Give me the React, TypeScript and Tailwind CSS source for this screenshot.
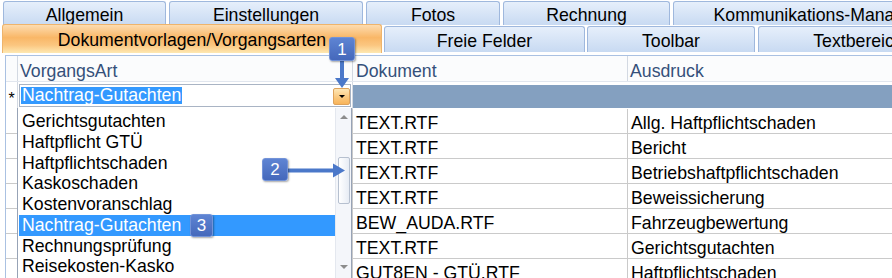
import React from "react";

const row1Tabs = [
  { label: "Allgemein", cls: "w-[163px]" },
  { label: "Einstellungen", cls: "w-[194px]" },
  { label: "Fotos", cls: "w-[134px]" },
  { label: "Rechnung", cls: "w-[167px]" },
  { label: "Kommunikations-Management", cls: "w-[321px]" },
];

const listItems = [
  "Gerichtsgutachten",
  "Haftpflicht GTÜ",
  "Haftpflichtschaden",
  "Kaskoschaden",
  "Kostenvoranschlag",
  "Nachtrag-Gutachten",
  "Rechnungsprüfung",
  "Reisekosten-Kasko",
];

const rows = [
  ["TEXT.RTF", "Allg. Haftpflichtschaden"],
  ["TEXT.RTF", "Bericht"],
  ["TEXT.RTF", "Betriebshaftpflichtschaden"],
  ["TEXT.RTF", "Beweissicherung"],
  ["BEW_AUDA.RTF", "Fahrzeugbewertung"],
  ["TEXT.RTF", "Gerichtsgutachten"],
  ["GUT8EN - GTÜ.RTF", "Haftpflichtschaden"],
];

const inactiveTab =
  "shrink-0 flex items-center justify-center border border-b-0 border-[#9fb8dd] rounded-t-[3px] bg-[linear-gradient(to_bottom,#e6effb,#c8daf2)] text-black whitespace-nowrap";

function Badge({ n, cls }: { n: string; cls: string }) {
  return (
    <div
      className={
        "absolute flex items-center justify-center rounded-[3px] border border-[#7393d8] bg-[linear-gradient(to_bottom,#5e84d3,#4568bb)] text-white text-[17px] leading-none shadow-[1px_1px_2px_rgba(0,0,0,0.35)] " +
        cls
      }
    >
      {n}
    </div>
  );
}

export default function App() {
  return (
    <div className="relative w-[892px] h-[278px] overflow-hidden bg-white text-[17.7px] text-black font-['Liberation_Sans',Arial,sans-serif]">
      {/* Tab row 1 */}
      <div className="flex h-[25px] pt-[1px] pl-[3px] gap-[3px]">
        {row1Tabs.map((t) => (
          <div key={t.label} className={inactiveTab + " h-[24px] pt-[3px] " + t.cls}>
            {t.label}
          </div>
        ))}
      </div>

      {/* Tab row 2 */}
      <div className="relative flex items-end h-[29px] -mt-[1px] pl-[2px] gap-[2px]">
        <div className="shrink-0 w-[380px] h-[29px] pt-[3px] flex items-center justify-center border border-b-0 border-[#eeb46c] rounded-t-[3px] bg-[linear-gradient(to_bottom,#fddcb0_0%,#f9b767_45%,#fbc680_72%,#fee9b2_100%)] whitespace-nowrap">
          Dokumentvorlagen/Vorgangsarten
        </div>
        <div className={inactiveTab + " w-[201px] h-[26px] mb-[1px] pt-[4px]"}>Freie Felder</div>
        <div className={inactiveTab + " w-[168px] h-[26px] mb-[1px] pt-[4px]"}>Toolbar</div>
        <div className={inactiveTab + " w-[201px] h-[26px] mb-[1px] pt-[4px] ml-[1px]"}>Textbereich</div>
      </div>

      {/* Content panel */}
      <div className="mt-[2px] ml-[5px] border-l border-t border-[#aac1e2] h-[223px]">
        {/* Header */}
        <div className="flex h-[26px] border-b border-[#e1e6ee] bg-[#fbfcfd] text-[#35507a]">
          <div className="w-[12px] border-r border-[#d3d9e2]" />
          <div className="w-[335px] border-r border-[#d3d9e2] pl-[2px] pt-[5px] leading-[20px]">VorgangsArt</div>
          <div className="w-[275px] border-r border-[#d3d9e2] pl-[3px] pt-[5px] leading-[20px]">Dokument</div>
          <div className="flex-1 pl-[2px] pt-[5px] leading-[20px]">Ausdruck</div>
        </div>

        {/* Row with combobox */}
        <div className="flex h-[27px]">
          <div className="w-[12px] border-r border-[#d3d9e2] flex items-center justify-center pt-[7px] text-[16px] leading-none">
            *
          </div>
          <div className="w-[335px] border-r border-[#d3d9e2] pt-[2px] pl-[1px] pr-[1px]">
            <div className="h-[23px] border border-[#a9b4c4] bg-white flex items-center pl-[1px]">
              <span className="h-[17px] leading-[17px] bg-[#3399ff] text-white pl-[1px] pr-[1px]">
                Nachtrag-Gutachten
              </span>
              <div className="flex-1" />
              <div className="w-[17px] h-[17px] mt-[1px] rounded-[2px] border border-[#dea35c] bg-[linear-gradient(to_bottom,#fee7b6,#fac67a_60%,#f8b45a)] flex items-center justify-center">
                <div className="w-0 h-0 border-x-[3px] border-x-transparent border-t-[3px] border-t-black" />
              </div>
            </div>
          </div>
          <div className="flex-1 pt-[3px]">
            <div className="h-[23px] bg-[#84a0c0]" />
          </div>
        </div>

        {/* Body rows */}
        {rows.map(([doc, aus], i) => (
          <div key={i} className="flex h-[25px] border-b border-[#cacaca]">
            <div className="w-[12px] border-r border-[#d3d9e2]" />
            <div className="w-[335px] border-r border-[#cacaca]" />
            <div className="w-[275px] border-r border-[#cacaca] pl-[3px] pt-[4px] leading-[20px] whitespace-nowrap">{doc}</div>
            <div className="flex-1 pl-[3px] pt-[4px] leading-[20px] whitespace-nowrap">{aus}</div>
          </div>
        ))}
      </div>

      {/* Dropdown list overlay */}
      <div className="absolute left-[17px] top-[108px] w-[335px] h-[172px] flex border-l border-r border-[#97a3b6] bg-white">
        <div className="flex-1 pt-[3.4px] pl-[1px]">
          {listItems.map((it) => (
            <div
              key={it}
              className={
                "h-[20.7px] leading-[20.7px] pl-[3px] whitespace-nowrap " +
                (it === "Nachtrag-Gutachten" ? "bg-[#3399ff] text-white" : "")
              }
            >
              {it}
            </div>
          ))}
        </div>
        <div className="w-[16px] flex flex-col bg-[#f4f6fa] border-l border-[#e4e8ef]">
          <div className="h-[18px] flex items-center justify-center">
            <div className="w-0 h-0 border-x-[4px] border-x-transparent border-b-[4px] border-b-[#8c8c8c]" />
          </div>
          <div className="h-[31px]" />
          <div className="mx-auto w-[12px] h-[47px] rounded-[2px] border border-[#b6c0cf] bg-[linear-gradient(to_right,#ffffff,#e7ecf4)]" />
          <div className="flex-1" />
          <div className="h-[18px] mb-[4px] flex items-center justify-center">
            <div className="w-0 h-0 border-x-[4px] border-x-transparent border-t-[4px] border-t-[#8c8c8c]" />
          </div>
        </div>
      </div>

      {/* Arrows */}
      <svg className="absolute left-0 top-0 pointer-events-none" width="892" height="278" viewBox="0 0 892 278">
        <line x1="342" y1="60" x2="342" y2="79" stroke="#4b78c9" strokeWidth="4" />
        <polygon points="335,78 349,78 342,88" fill="#4b78c9" />
        <line x1="287" y1="170.5" x2="334" y2="170.5" stroke="#4b78c9" strokeWidth="4" />
        <polygon points="333,163.5 333,177.5 345,170.5" fill="#4b78c9" />
      </svg>

      <Badge n="1" cls="left-[329px] top-[37px] w-[26px] h-[24px]" />
      <Badge n="2" cls="left-[262px] top-[158px] w-[26px] h-[23px]" />
      <Badge n="3" cls="left-[190px] top-[214px] w-[23px] h-[23px]" />
    </div>
  );
}
